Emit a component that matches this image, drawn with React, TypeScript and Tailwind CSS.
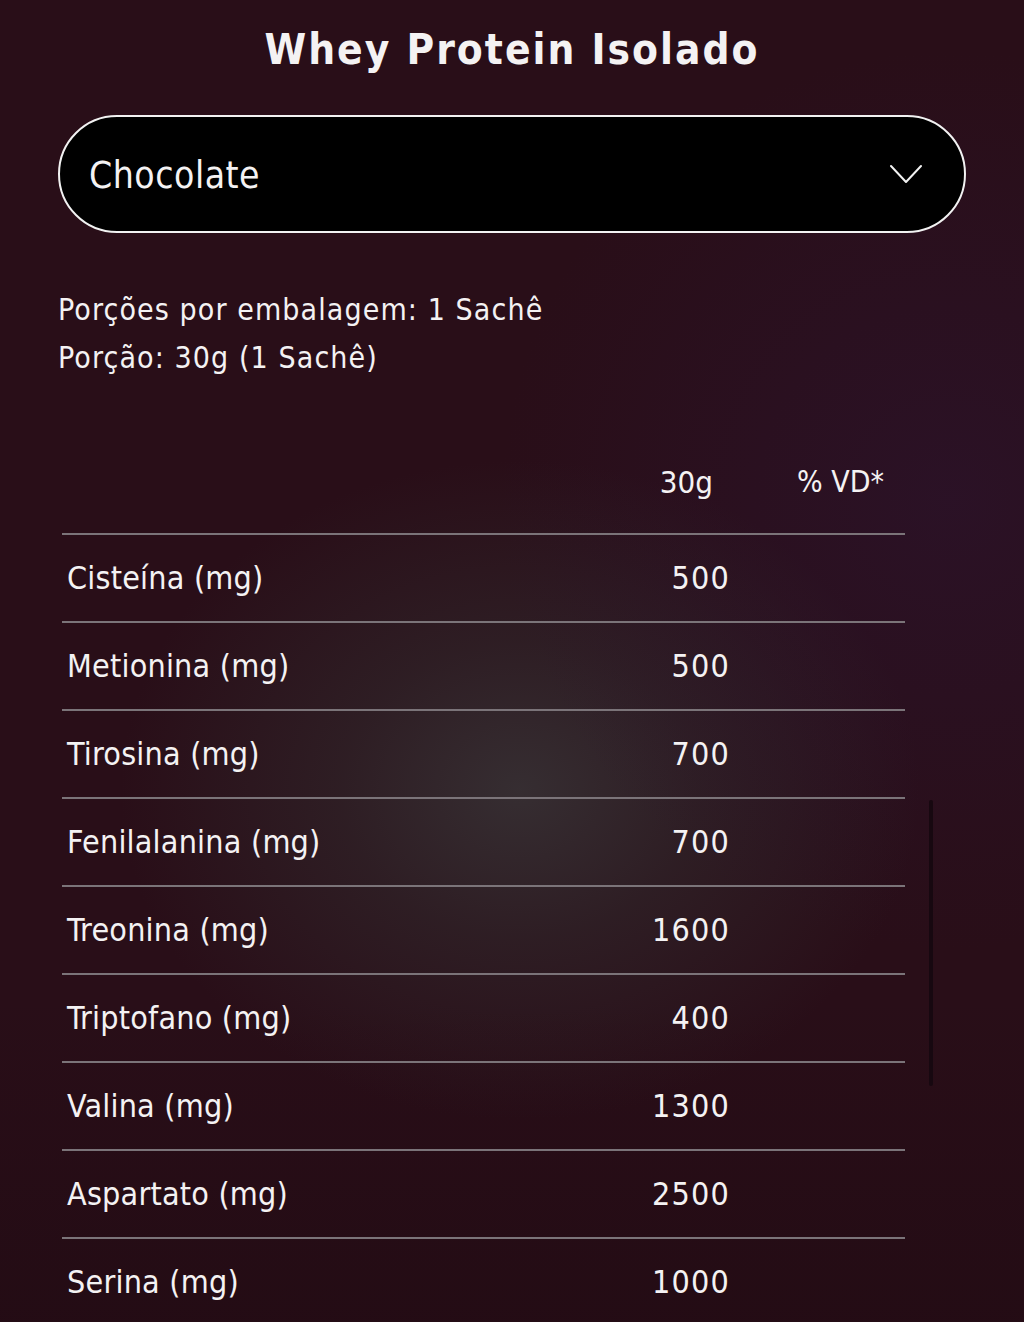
import React from "react";

const rows: [string, string][] = [
  ["Cisteína (mg)", "500"],
  ["Metionina (mg)", "500"],
  ["Tirosina (mg)", "700"],
  ["Fenilalanina (mg)", "700"],
  ["Treonina (mg)", "1600"],
  ["Triptofano (mg)", "400"],
  ["Valina (mg)", "1300"],
  ["Aspartato (mg)", "2500"],
  ["Serina (mg)", "1000"],
];

export default function App() {
  return (
    <div
      className="relative w-[1024px] h-[1322px] overflow-hidden text-[#f4f2f3] bg-[#290e18]"
      style={{ fontFamily: '"DejaVu Sans Condensed", "DejaVu Sans", sans-serif' }}
    >
      <div className="absolute inset-0 bg-[radial-gradient(ellipse_400px_330px_at_520px_790px,rgba(58,56,58,0.75),rgba(52,48,50,0.45)_45%,rgba(0,0,0,0)_100%)]" />
      <div className="absolute inset-0 bg-[radial-gradient(ellipse_450px_450px_at_950px_500px,rgba(45,22,55,0.45),rgba(0,0,0,0)_100%)]" />
      <div className="absolute inset-0 bg-[linear-gradient(to_bottom,rgba(0,0,0,0)_75%,rgba(20,5,10,0.25)_100%)]" />
      <div className="relative flex flex-col px-[58px] pt-[20px]">
        <h1 className="h-[60px] leading-[60px] text-center font-bold text-[42px] tracking-[2px]">
          Whey Protein Isolado
        </h1>
        <div className="mt-[35px] h-[118px] w-[908px] rounded-full border-2 border-[#f2f2f2] bg-black flex items-center justify-between pl-[29px] pr-[42px]">
          <span className="text-[37px] tracking-[0.5px] pt-[3px]">Chocolate</span>
          <svg width="32" height="20" viewBox="0 0 32 20" fill="none">
            <polyline points="1,2 16,18 31,2" stroke="#f2f2f2" strokeWidth="2" strokeLinecap="round" strokeLinejoin="round" />
          </svg>
        </div>
        <div className="mt-[53px] text-[30px] leading-[48px] tracking-[1.1px]">
          <p>Porções por embalagem: 1 Sachê</p>
          <p>Porção: 30g (1 Sachê)</p>
        </div>
        <div className="ml-[4px] w-[843px] flex flex-col">
          <div className="flex pt-[80px] pb-[31px] text-[31px] leading-[40px]">
            <div className="flex-1" />
            <div className="w-[100px] text-right pr-[17px]">30g</div>
            <div className="w-[175px] pl-[67px] text-[30px]">% VD*</div>
          </div>
          {rows.map(([name, val]) => (
            <div key={name} className="h-[88px] border-t-2 border-[#7b7479] flex items-center text-[32px] tracking-[0.2px]">
              <div className="flex-1 pl-[5px]">{name}</div>
              <div className="w-[120px] text-right tracking-[1.2px]">{val}</div>
              <div className="w-[175px]" />
            </div>
          ))}
        </div>
      </div>
      <div className="absolute left-[929px] top-[800px] w-[4px] h-[286px] rounded-full bg-[#170810]" />
    </div>
  );
}
